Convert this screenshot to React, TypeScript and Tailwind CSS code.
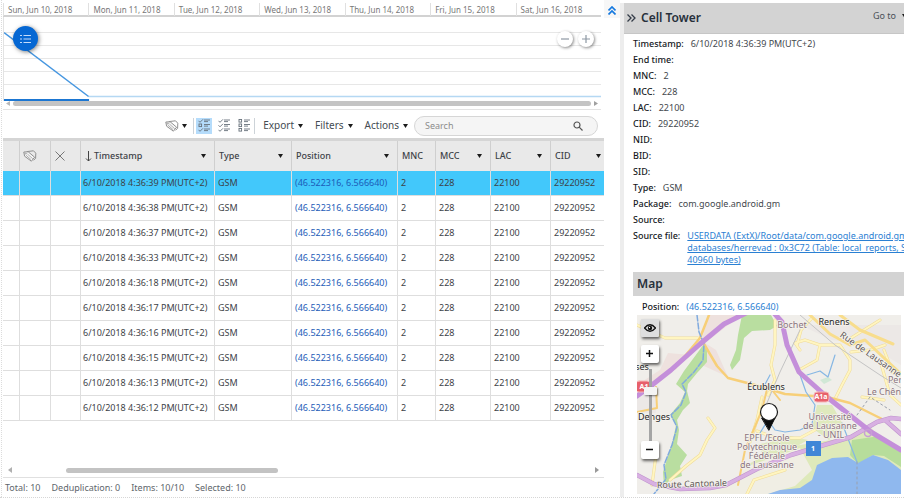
import React, { useState } from "react";

const DAYS = [
  "Sun, Jun 10, 2018",
  "Mon, Jun 11, 2018",
  "Tue, Jun 12, 2018",
  "Wed, Jun 13, 2018",
  "Thu, Jun 14, 2018",
  "Fri, Jun 15, 2018",
  "Sat, Jun 16, 2018",
];

const SECONDS = ["39", "38", "37", "33", "18", "17", "16", "15", "13", "12"];

const ROWS = SECONDS.map((s) => ({
  time: `6/10/2018 4:36:${s} PM(UTC+2)`,
  type: "GSM",
  position: "(46.522316, 6.566640)",
  mnc: "2",
  mcc: "228",
  lac: "22100",
  cid: "29220952",
}));

const DETAILS: [string, string][] = [
  ["Timestamp:", "6/10/2018 4:36:39 PM(UTC+2)"],
  ["End time:", ""],
  ["MNC:", "2"],
  ["MCC:", "228"],
  ["LAC:", "22100"],
  ["CID:", "29220952"],
  ["NID:", ""],
  ["BID:", ""],
  ["SID:", ""],
  ["Type:", "GSM"],
  ["Package:", "com.google.android.gm"],
  ["Source:", ""],
];

const MINOR_ROADS =
  "M637 325 665 338 698 338M656 455 652 485M708 418 715 428 707 440 700 455 686 466 670 480M775 320V345L771 365 775 380 768 395M800 350 795 343 805 340 820 345 817 360 799 370M821 345 840 345 850 360 850 370 842 385 836 397M797 345 801 330 812 318M851 352 870 350 885 345M884 350 893 373M851 338 880 320M747 494 754 480 785 470M762 397 757 420 750 442M757 431 775 438 800 438 815 430M880 360 890 395 901 405M862 397 884 400";

function Caret() {
  return (
    <svg className="h-[4px] w-[5px] shrink-0" viewBox="0 0 5 4" aria-hidden="true">
      <path d="M0 0H5L2.500 4Z" fill="#1c1c1c" />
    </svg>
  );
}

function TagIcon() {
  return (
    <svg className="h-[12px] w-[14px]" viewBox="0 0 14 12" fill="none" stroke="#858585" strokeWidth="0.900" strokeLinejoin="round" aria-hidden="true">
      <path d="M3.800 1.600 10.500 .800 12.800 3.200 12.600 8.400 10.600 10.200" />
      <path d="M.800 2 5.200 1.800 11.600 7.200 8.400 11.200 1.600 6.200Z" fill="#f6f6f6" />
      <path d="M4.400 4 9.800 8.800M3 5.200 8 9.600" strokeWidth=".6" />
      <circle cx="2.800" cy="3.600" r=".6" strokeWidth=".6" />
    </svg>
  );
}

function ListIcon({ kind }: { kind: "mixed" | "checked" | "empty" }) {
  return (
    <svg className="h-[13px] w-[12px]" viewBox="0 0 12 13" fill="none" stroke="#66707a" strokeWidth="0.900" aria-hidden="true">
      {[0, 4.5, 9].map((y, i) =>
        kind === "checked" || (kind === "mixed" && i !== 1) ? (
          <path key={y} d={`M.5 ${y + 1.8}l1.500 1.500L5 ${y + 0.3}`} />
        ) : (
          <rect key={y} x="1" y={y + 0.5} width="2.600" height="2.600" />
        ),
      )}
      {[1, 5.5, 10].map((y) => (
        <path key={y} d={`M6 ${y}H12M6 ${y + 1.6}H10`} strokeWidth=".9" />
      ))}
    </svg>
  );
}

function Timeline() {
  return (
    <section className="border-b border-[#e3e3e3]" aria-label="Timeline">
      <div className="grid h-[15px] grid-cols-7 pt-[3px]">
        {DAYS.map((d) => (
          <div key={d} className="whitespace-nowrap border-l border-[#e0e0e0] pl-1 text-[8px] leading-[13px] text-[#777]">
            {d}
          </div>
        ))}
      </div>
      <div className="h-[2px] bg-[#d2d2d2]" />
      <div className="relative h-[84px] border-l border-[#e3e3e3]">
        <svg className="block h-full w-full" viewBox="0 0 600 84" preserveAspectRatio="none" fill="none">
          {[15.5, 28.5, 41.5, 54.5, 67.5].map((y) => (
            <path key={y} d={`M0 ${y}H600`} stroke="#e7e7e7" />
          ))}
          <path d="M85 79.500H600" stroke="#b5d8f3" strokeWidth="1.500" />
          <path d="M0 15.500 85 79.500" stroke="#4596e0" strokeWidth="1.500" />
          <path d="M0 83H85.500" stroke="#1b76d2" strokeWidth="2" />
        </svg>
        <button aria-label="List" className="absolute left-[9px] top-[9px] flex size-[25px] items-center justify-center rounded-full bg-[#0567d3] shadow-[1px_1px_4px_rgba(0,0,0,0.5)]">
          <svg className="h-[10px] w-[12px]" viewBox="0 0 12 10" stroke="#c4dcfb" aria-hidden="true">
            <path d="M0 1.500h2M3.500 1.500H11M0 5h2M3.500 5H11M0 8.500h2M3.500 8.500H11" strokeWidth="1.100" />
          </svg>
        </button>
        <div className="absolute right-[7px] top-[14px] flex gap-[5px]">
          {["M4 8H12", "M4 8H12M8 4V12"].map((d, i) => (
            <button key={d} aria-label={i ? "Zoom in" : "Zoom out"} className="size-4 rounded-full bg-white shadow-[1px_1px_3px_rgba(0,0,0,0.45)]">
              <svg className="size-4" viewBox="0 0 16 16" stroke="#8d98a3" strokeWidth="1.200" aria-hidden="true">
                <path d={d} />
              </svg>
            </button>
          ))}
        </div>
      </div>
      <div className="flex h-[5px] items-center gap-[2px] px-[3px]">
        <svg className="size-[5px]" viewBox="0 0 5 5"><path d="M4 0V5L0 2.500Z" fill="#b9b9b9" /></svg>
        <div className="h-[5px] flex-1 rounded-full bg-[#c4c4c4]" />
        <svg className="size-[5px]" viewBox="0 0 5 5"><path d="M1 0V5L5 2.500Z" fill="#a0a0a0" /></svg>
      </div>
      <div className="h-[3px]" />
    </section>
  );
}

function Toolbar() {
  return (
    <div className="flex h-[29px] items-center justify-end border-b-[3px] border-[#d5d5d5] pr-[6px] pt-px text-[10px] text-[#444b52]">
      <button aria-label="Tags" className="mr-[6px] flex items-center gap-[3px]">
        <TagIcon />
        <Caret />
      </button>
      <div className="flex items-center gap-1 border-x border-[#cdd3d8] px-[2px]">
        <button aria-label="Mixed selection" className="flex h-4 w-4 items-center justify-center bg-[#b5dcfb]"><ListIcon kind="mixed" /></button>
        <button aria-label="Select all" className="flex h-4 w-4 items-center justify-center"><ListIcon kind="checked" /></button>
        <button aria-label="Clear selection" className="flex h-4 w-4 items-center justify-center"><ListIcon kind="empty" /></button>
      </div>
      <div className="ml-2 mr-[6px] flex items-center gap-3">
        {["Export", "Filters", "Actions"].map((t) => (
          <button key={t} className="flex items-center gap-1">
            {t}
            <Caret />
          </button>
        ))}
      </div>
      <label className="flex h-5 w-[184px] items-center rounded-full border border-[#d6d6d6] bg-[#f5f5f5] pl-[10px] pr-[14px]">
        <span className="sr-only">Search</span>
        <input type="text" placeholder="Search" className="h-4 min-w-0 flex-1 bg-transparent text-[9px] outline-none placeholder:text-[#8c8c8c]" />
        <svg className="size-[10px]" viewBox="0 0 10 10" fill="none" stroke="#555" strokeWidth="1.200" aria-hidden="true">
          <circle cx="4" cy="4" r="3" />
          <path d="M6.200 6.200 9.500 9.500" />
        </svg>
      </label>
    </div>
  );
}

function Head({ label, filter = true, sorted = false }: { label: string; filter?: boolean; sorted?: boolean }) {
  return (
    <th scope="col" className="border-l border-[#cfcfcf] pl-1 pr-2 text-left font-medium">
      <div className="flex items-center justify-between">
        <span className="flex items-center gap-[2px]">
          {sorted && (
            <svg className="h-[11px] w-[7px]" viewBox="0 0 7 11" fill="none" stroke="#444" aria-hidden="true">
              <path d="M3.500 0V10M1 7.500 3.500 10 6 7.500" />
            </svg>
          )}
          {label}
        </span>
        {filter && (
          <button aria-label={`Filter ${label}`} className="flex">
            <Caret />
          </button>
        )}
      </div>
    </th>
  );
}

function Grid() {
  const [selected, setSelected] = useState(0);
  const cell = "border-l border-[#dedede] pl-[3px]";
  return (
    <table className="w-full table-fixed border-separate border-spacing-0 whitespace-nowrap text-[9px] text-[#3d4247]">
      <colgroup>
        <col className="w-[16px]" />
        <col className="w-[31px]" />
        <col className="w-[30px]" />
        <col className="w-[134px]" />
        <col className="w-[77px]" />
        <col />
        <col className="w-[38px]" />
        <col className="w-[55px]" />
        <col className="w-[60px]" />
        <col className="w-[54px]" />
      </colgroup>
      <thead>
        <tr className="h-[30px] bg-[#e9e9e9]">
          <th aria-label="Row" />
          <th scope="col" aria-label="Tags" className="border-l border-[#cfcfcf] pl-[3px]"><TagIcon /></th>
          <th scope="col" aria-label="Deleted" className="border-l border-[#cfcfcf] pl-1">
            <svg className="size-[10px]" viewBox="0 0 10 10" stroke="#777" aria-hidden="true"><path d="M.500 .500 9.500 9.500M9.500 .500 .500 9.500" /></svg>
          </th>
          <Head label="Timestamp" sorted />
          <Head label="Type" />
          <Head label="Position" />
          <Head label="MNC" filter={false} />
          <Head label="MCC" />
          <Head label="LAC" />
          <th scope="col" className="border-l border-[#cfcfcf] pl-1 pr-[3px] text-left font-medium">
            <div className="flex items-center justify-between">
              CID
              <button aria-label="Filter CID" className="flex"><Caret /></button>
            </div>
          </th>
        </tr>
      </thead>
      <tbody>
        {ROWS.map((r, i) => (
          <tr key={r.time} onClick={() => setSelected(i)} className={i === selected ? "h-[25px] bg-[#42c8fb] *:border-b *:border-b-[#dedede]" : "h-[25px] bg-white *:border-b *:border-b-[#dedede]"}>
            <td />
            <td className={cell} />
            <td className={cell} />
            <td className="border-l border-[#dedede] pl-[2px]">{r.time}</td>
            <td className={cell}>{r.type}</td>
            <td className={cell}><a href="#map" className="text-[#1c5cb8]">{r.position}</a></td>
            <td className={cell}>{r.mnc}</td>
            <td className={cell}>{r.mcc}</td>
            <td className={cell}>{r.lac}</td>
            <td className={cell}>{r.cid}</td>
          </tr>
        ))}
      </tbody>
    </table>
  );
}

function MapDrawing() {
  return (
    <svg className="block h-[179px] w-full" viewBox="637 315 264 179" preserveAspectRatio="xMidYMid slice" fill="none" strokeLinejoin="round" strokeLinecap="round" role="img" aria-label="Map of Écublens and Lausanne">
      <rect x="600" y="300" width="340" height="220" fill="#f0eeea" />
      <path d="M709 315H741L705 343 716 350 728 377 704 366 700 345ZM637 397 690 355 668 353 660 370 637 385Z" fill="#eee1de" />
      <path d="M637 395H656V413H637ZM800 325H901V365L868 345 832 340Z" fill="#ece8e6" />
      <path d="M742 315H771L777 326 770 330 752 331 744 338 740 360 732 370 730 365 736 350 738 335Z" fill="#b9dea0" />
      <path d="M704 344 707 350 707 362 697 373 688 384 687 391 690 403 683 410 677 420 679 430 677 444 687 455 680 466 682 476 670 480 664 486 663 472 668 456 673 440 676 425 670 415 680 403 685 392 676 384 684 371Z" fill="#b9dea0" />
      <path d="M817 405 832 405 845 428 829 440 812 428ZM757 445 790 436 808 440 790 450 764 456Z" fill="#dfe9bd" />
      <path d="M747 465 765 455 800 445 850 437 871 428 880 437 901 452V494H740Z" fill="#dee9ba" />
      <path d="M852 440 880 436 901 450V467L884 456 873 455 858 464 850 455Z" fill="#b7dd9b" />
      <path d="M748 466 800 448 812 470 795 486 768 494H700L730 486Z" fill="#f0eee4" />
      <path d="M768 494 780 490 800 488 812 480 817 465 832 458 848 457 858 463 873 455 888 460 901 470V500H768Z" fill="#8fb8ee" />
      <path d="M820 380 828 377 832 380 824 384Z" fill="#d1e8d6" />

      <path d={MINOR_ROADS} stroke="#efdb98" strokeWidth="3" />
      <path d={MINOR_ROADS} stroke="#fff5c0" strokeWidth="2" />

      <g stroke="#f7cf78" strokeWidth="2.500">
        <path d="M709 315 700 338 675 368 660 377M704 344 717 366 728 378 755 385 785 394 827 397 850 403 884 420" />
        <path d="M780 400 768 385 762 410 745 450 738 485M656 387 657 408 637 412" strokeWidth="2" />
        <path d="M810 315 830 334 850 345 865 340 901 374M840 315 860 330 893 344" strokeWidth="3" stroke="#f8dd8c" />
      </g>
      <path d="M800 315 835 345 880 375 901 388M764 410 780 372 800 330" stroke="#c4c4c4" />
      <path d="M697 315 699 332 704 344 703 360 694 372 682 384 686 392 681 405 671 415 677 427 672 445 664 465 666 479 654 494" stroke="#80aade" strokeWidth="1.500" strokeDasharray="6 2" />
      <path d="M807 375 820 371 828 377 835 355M799 372 806 392 815 405 812 424 800 430 785 432 775 430 768 420 760 433M762 390 770 375M842 423 857 462" stroke="#86b7e4" strokeWidth="1.200" />
      <path d="M637 475 654 484 680 489 710 488 726 485 757 469 791 455 824 445 851 437 877 422 891 418 901 419M885 420 901 434" stroke="#bf94cd" strokeWidth="4.500" />
      <path d="M637 475 654 484 680 489 710 488 726 485 757 469 791 455 824 445 851 437 877 422 891 418 901 419M885 420 901 434" stroke="#d8b0e2" strokeWidth="3.400" />
      <path d="M746 313 724 324 700 344 671 370 652 385 637 396M774 313 782 322 787 345 799 372 827 397 871 432 901 450" stroke="#c48fda" strokeWidth="5" />
      <circle cx="868" cy="433" r="3.500" stroke="#c79fd4" strokeWidth="1.500" />
      <path d="M857 462V494M857 415 870 397 890 410" stroke="#9aa0ad" strokeDasharray="2 3" />

      <rect x="814" y="392" width="15" height="10" rx="3" fill="#e7606b" stroke="#f7b7b9" />
      <rect x="636" y="381" width="14" height="11" rx="3" fill="#e7606b" stroke="#f7b7b9" />
      <rect x="806" y="441" width="15" height="15" fill="#4087d7" />

      <g fontFamily="Noto Sans, sans-serif" fontSize="9" textAnchor="middle" stroke="none">
        <g fill="#fff" fontSize="7" fontWeight="700">
          <text x="821" y="399">A1a</text>
          <text x="644" y="389">A1</text>
          <text x="813" y="451">1</text>
        </g>
        <g paintOrder="stroke" stroke="#f5f3ee" strokeWidth="1.500">
          <g fill="#282828">
            <text x="834" y="325">Renens</text>
            <text x="766" y="390">Écublens</text>
            <text x="654" y="420">Denges</text>
            <text x="642" y="370">ses</text>
          </g>
          <g fill="#8b7580">
            <text x="792" y="328">Bochet</text>
            <text x="895" y="383">Per</text>
            <text x="884" y="395">Le Chên</text>
            <text x="830" y="420">Université</text>
            <text x="830" y="429">de Lausanne</text>
            <text x="831" y="438">- UNIL</text>
            <text x="767" y="441">EPFL/Ecole</text>
            <text x="767" y="450">Polytechnique</text>
            <text x="767" y="459">Fédérale</text>
            <text x="767" y="468">de Lausanne</text>
          </g>
          <g fill="#625958">
            <text x="869" y="357" transform="rotate(35 869 357)">Rue de Lausanne</text>
            <text x="692" y="487" transform="rotate(-2 692 487)">Route Cantonale</text>
          </g>
        </g>
      </g>
      <path d="M762 418H775L769 430Z" fill="#0b0b0b" stroke="#0b0b0b" />
      <circle cx="769" cy="412" r="8.500" fill="#fff" stroke="#1b1b1b" strokeWidth="1.200" />
    </svg>
  );
}

function MapView() {
  return (
    <div id="map" className="relative ml-1 mr-[3px] overflow-hidden">
      <MapDrawing />
      <button aria-label="Toggle map view" className="absolute left-[4px] top-[4px] flex size-[18px] items-center justify-center rounded-[1px] bg-[#dedede] shadow-[1px_2px_3px_rgba(0,0,0,0.6)]">
        <svg className="h-[8px] w-[12px]" viewBox="0 0 12 8" aria-hidden="true">
          <path d="M.500 4Q6-2.500 11.500 4 6 10.500 .500 4Z" fill="none" stroke="#111" strokeWidth="1.300" />
          <circle cx="6" cy="4" r="2.200" fill="#111" />
          <circle cx="5.500" cy="3.500" r=".7" fill="#fff" />
        </svg>
      </button>
      <input
        type="range"
        aria-label="Map zoom"
        min={0}
        max={100}
        defaultValue={72}
        className="absolute left-[6px] top-[54px] h-[72px] w-[14px] appearance-none bg-[linear-gradient(to_right,transparent_6px,#a5a5a5_6px,#a5a5a5_9px,transparent_9px)] [direction:rtl] [writing-mode:vertical-lr] [&::-webkit-slider-thumb]:h-[8px] [&::-webkit-slider-thumb]:w-[13px] [&::-webkit-slider-thumb]:appearance-none [&::-webkit-slider-thumb]:rounded-[1px] [&::-webkit-slider-thumb]:bg-[#f4f4f4] [&::-webkit-slider-thumb]:shadow-[1px_1px_2px_rgba(0,0,0,0.5)]"
      />
      <button aria-label="Zoom in" className="absolute left-[4px] top-[30px] size-[18px] rounded-[2px] bg-white shadow-[1px_2px_3px_rgba(0,0,0,0.6)]">
        <svg className="size-[18px]" viewBox="0 0 18 18" stroke="#111" strokeWidth="1.500" aria-hidden="true"><path d="M5 8.500H12M8.500 5V12" /></svg>
      </button>
      <button aria-label="Zoom out" className="absolute left-[4px] top-[126px] size-[18px] rounded-[2px] bg-white shadow-[1px_2px_3px_rgba(0,0,0,0.6)]">
        <svg className="size-[18px]" viewBox="0 0 18 18" stroke="#111" strokeWidth="1.500" aria-hidden="true"><path d="M5 8.500H12" /></svg>
      </button>
    </div>
  );
}

function Details() {
  return (
    <aside className="w-[280px] shrink-0 overflow-hidden text-[9px] text-[#43484d]">
      <header className="mt-[3px] flex h-[31px] items-center gap-[5px] whitespace-nowrap border-b border-[#c6c6c6] bg-[#d3d3d3] pl-[3px] text-[#27303b]">
        <button aria-label="Collapse details" className="flex">
          <svg className="h-[8px] w-[9px]" viewBox="0 0 9 8" fill="none" stroke="#333b47" strokeWidth="1.300" aria-hidden="true">
            <path d="M.500 .500 4 4 .500 7.500M4.500 .500 8 4 4.500 7.500" />
          </svg>
        </button>
        <h2 className="flex-1 text-[12px] font-semibold">Cell Tower</h2>
        <button className="-mr-[3px] flex items-center gap-[6px] pb-[4px] text-[#4a5057]">
          Go to
          <Caret />
        </button>
      </header>
      <div className="whitespace-nowrap pl-[9px] pt-[2px]">
        <dl>
          {DETAILS.map(([k, v]) => (
            <div key={k} className="flex h-4 items-center gap-[7px]">
              <dt className="font-medium text-[#15191d]">{k}</dt>
              <dd>{v}</dd>
            </div>
          ))}
          <div className="flex h-[44px] gap-[7px] pt-[2px] leading-[12px]">
            <dt className="font-medium text-[#15191d]">Source file:</dt>
            <dd>
              <a href="#source" className="text-[#2a80d3] underline">
                USERDATA (ExtX)/Root/data/com.google.android.gms/<br />
                databases/herrevad : 0x3C72 (Table: local_reports, Size:<br />
                40960 bytes)
              </a>
            </dd>
          </div>
        </dl>
        <h3 className="flex h-6 items-center bg-[#d3d3d3] pl-1 text-[12px] font-semibold text-[#27303b]">Map</h3>
        <p className="flex h-[19px] items-center gap-[7px] pl-[9px] pt-[2px]">
          <span className="font-medium text-[#15191d]">Position:</span>
          <a href="#map" className="text-[#2a80d3]">(46.522316, 6.566640)</a>
        </p>
        <MapView />
      </div>
    </aside>
  );
}

export default function App() {
  return (
    <div className="flex min-h-screen border-b border-dotted border-[#d6d6d6] bg-white font-['Noto_Sans','Open_Sans',sans-serif]">
      <div className="w-[2px] shrink-0 border-r border-dotted border-[#dcdcdc]" />
      <main className="flex min-w-0 flex-1 flex-col pl-px">
        <div className="flex">
          <div className="min-w-0 flex-1">
            <Timeline />
          </div>
          <button aria-label="Collapse timeline" className="ml-[3px] flex h-[18px] w-4 items-center justify-center bg-[#f7f7f7] pt-[3px]">
            <svg className="h-[9px] w-[8px]" viewBox="0 0 8 9" fill="none" stroke="#1679df" strokeWidth="1.700" aria-hidden="true">
              <path d="M.500 4.500 4 1 7.500 4.500M.500 8.500 4 5 7.500 8.500" />
            </svg>
          </button>
        </div>
        <div className="mr-4 flex flex-1 flex-col pt-[2px]">
          <Toolbar />
          <Grid />
          <div className="mt-auto flex h-[14px] items-center px-[5px]">
            <svg className="h-[6px] w-[4px]" viewBox="0 0 4 6"><path d="M4 0V6L0 3Z" fill="#b0b0b0" /></svg>
            <div className="flex-1 pl-[54px]">
              <div className="h-[5px] w-[40%] rounded-full bg-[#c3c3c3]" />
            </div>
            <svg className="h-[6px] w-[4px]" viewBox="0 0 4 6"><path d="M0 0V6L4 3Z" fill="#999" /></svg>
          </div>
          <footer className="flex h-[20px] items-center gap-[11px] border-t border-[#e0e0e0] pl-[2px] text-[9px] text-[#60666c]">
            <span>Total: 10</span>
            <span>Deduplication: 0</span>
            <span>Items: 10/10</span>
            <span>Selected: 10</span>
          </footer>
        </div>
      </main>
      <div className="mt-[3px] w-[4px] shrink-0 bg-[#ededed]" />
      <Details />
    </div>
  );
}
